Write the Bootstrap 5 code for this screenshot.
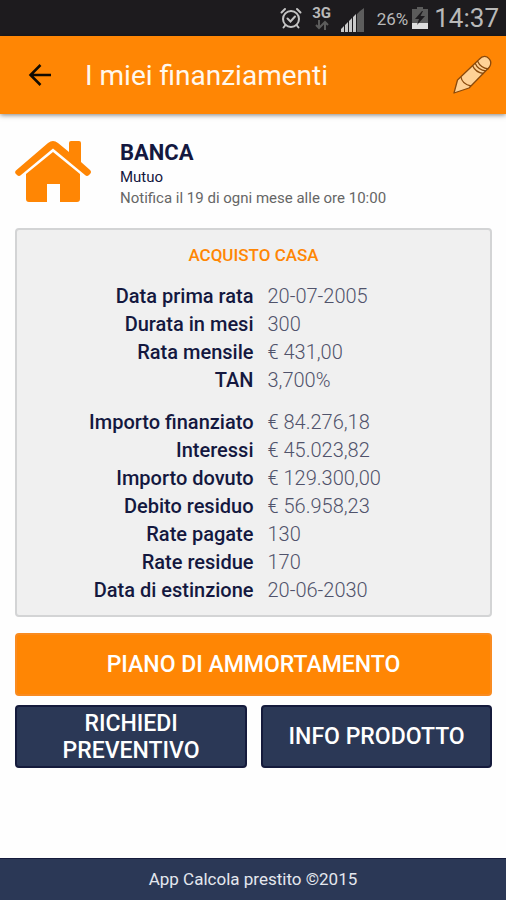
<!DOCTYPE html>
<html lang="it">
<head>
<meta charset="utf-8">
<meta name="viewport" content="width=device-width, initial-scale=1">
<title>I miei finanziamenti</title>
<link rel="stylesheet" href="https://cdn.jsdelivr.net/npm/bootstrap@5.3.0/dist/css/bootstrap.min.css">
<style>
  :root { --brand: #ff8604; --navy: #2b3856; --ink: #14183f; }
  body { font-family: Roboto, "Liberation Sans", sans-serif; color: var(--ink); background: #fefefe; }
  .status-bar { height: 36px; background: #1d1b1e; color: #b9b9b9; padding-right: 7px; line-height: 36px; }
  .status-bar .network { width: 22px; line-height: 14px; font-size: 15px; }
  .status-bar .percent { font-size: 17px; padding-top: 2px; }
  .status-bar .battery { margin: 0 6px 0 4px; }
  .status-bar .clock { font-size: 26px; }
  .app-bar { height: 78px; background: var(--brand); box-shadow: 0 1px 5px rgba(0, 0, 0, .5); padding: 0 14px 0 28px; }
  .app-title { font-size: 28px; line-height: 36px; color: #fff8ee; margin-left: 33px; padding-top: 2px; }
  .page-body { padding: 24px 14px 16px 15px; }
  .loan-icon { width: 76px; height: 64px; margin-top: 2px; }
  .loan-text { margin-left: 29px; }
  .loan-name { font-size: 22px; line-height: 29px; }
  .loan-line { font-size: 15px; line-height: 21px; }
  .loan-note { color: #666; }
  .loan-card { background: #f0f0f0; border: 2px solid #d3d4d5; border-radius: 4px; margin-top: 19px; padding: 12px 0 11px; }
  .loan-card h3 { font-size: 17px; line-height: 26px; color: var(--brand); margin-bottom: 14px; }
  .figures { font-size: 20px; line-height: 28px; table-layout: fixed; }
  .figures tbody + tbody::before { content: ""; display: block; height: 14px; }
  .figures th { padding: 0; text-align: right; font-weight: 500; }
  .figures td { padding: 0 0 0 14px; color: #50536b; font-weight: 300; }
  .action { min-height: 63px; padding: 2px 30px; font-size: 23px; line-height: 27px; font-weight: 500; border-radius: 4px; border-width: 2px; --bs-btn-color: #fff; --bs-btn-hover-color: #fff; --bs-btn-active-color: #fff; }
  .action-main { --bs-btn-bg: var(--brand); --bs-btn-border-color: #f98b20; --bs-btn-hover-bg: #f07c00; --bs-btn-active-bg: #e07400; }
  .action-alt { --bs-btn-bg: var(--navy); --bs-btn-border-color: #151b3c; --bs-btn-hover-bg: #222d47; --bs-btn-active-bg: #1b2439; }
  .actions { gap: 14px; margin-top: 9px; }
  .app-footer { background: var(--navy); border-top: 1px solid #151b3c; color: #e4e7ee; font-size: 17px; line-height: 41px; }
</style>
<script src="https://cdn.jsdelivr.net/npm/bootstrap@5.3.0/dist/js/bootstrap.bundle.min.js" defer></script>
</head>
<body class="d-flex flex-column min-vh-100">
<div class="status-bar d-flex align-items-center justify-content-end">
  <svg class="me-2" width="24" height="24" viewBox="0 0 24 24" fill="none" stroke="#c4c4c4" stroke-width="2" stroke-linecap="round" aria-label="Sveglia"><circle cx="12" cy="13" r="8"/><path d="M2.500 6.500 6 3M21.500 6.500 18 3M6.500 19 4.500 21.500M17.500 19l2 2.500M8.500 12.500l3 3 4.500-5"/></svg>
  <div class="network text-center fw-bold me-1">3G
    <svg class="d-block mx-auto" width="14" height="10" viewBox="0 0 14 10" fill="none" stroke="#5c5c5c" stroke-width="2" aria-hidden="true"><path d="M4 0v8M1 5l3 3 3-3M10 10V2M7 5l3-3 3 3"/></svg>
  </div>
  <svg class="mx-1 mt-1" width="24" height="24" viewBox="0 0 24 24" aria-label="Segnale"><path fill="#cacaca" d="M0 24v-3l3-3v6zM4 24v-7l3-3v10zM8 24V13l3-3v14zM12 24V9l3-3v18z"/><path fill="#5d5d5d" d="M16 24V6l3-3v21zM19 24V3l4-3v24z"/></svg>
  <span class="percent ms-2">26%</span>
  <svg class="battery" width="16" height="22" viewBox="0 0 16 22" aria-label="Batteria"><path fill="#5b5b5b" d="M5 0h6v2h5v14H0V2h5z"/><path fill="#dedede" d="M0 16h16v6H0z"/><path fill="#1d1b1e" d="M10 4 3 12h4l-2 6 8-9H8.500L11 4z"/></svg>
  <span class="clock">14:37</span>
</div>

<header class="app-bar d-flex align-items-center">
  <button type="button" class="btn p-0 border-0 d-flex" aria-label="Indietro">
    <svg width="24" height="24" viewBox="0 0 24 24" fill="none" stroke="#120b02" stroke-width="2.500"><path d="M23 12H3M12.500 2 2.500 12l10 10"/></svg>
  </button>
  <h1 class="app-title fw-normal mb-0">I miei finanziamenti</h1>
  <button type="button" class="btn p-0 border-0 d-flex ms-auto" aria-label="Modifica">
    <svg width="40" height="40" viewBox="0 0 40 40" fill="#ffd296" stroke="#8a4a0c" stroke-width="1.300" stroke-linejoin="round"><path d="M2 38 5.500 25 27 4.500Q31 0 35 2q6 4 2.500 10L17 33z"/><path fill="none" d="M9 22q1 7 10 9M23 8q3 7 11 8M25.500 6q3 7 11 8M20.500 10.500q3 7 11 8"/></svg>
  </button>
</header>

<main class="page-body flex-grow-1">
  <section class="d-flex">
    <svg class="loan-icon flex-shrink-0" viewBox="0 0 76 64" fill="#ff8604" aria-hidden="true"><path d="M11 34 38 12l27 22v25q0 3-3 3H45V44H32v18H14q-3 0-3-3z"/><path d="M1.500 30 33 3q5-4 10 0l11 9V3q0-2 2-2h8q2 0 2 2v19l9 8q2 2 0 4l-1 1q-2 2-4 0L38 8.500 6 35q-2 2-4 0l-1-1q-2-2 .5-4z"/></svg>
    <div class="loan-text">
      <h2 class="loan-name fw-bold mb-0">BANCA</h2>
      <p class="loan-line mb-0">Mutuo</p>
      <p class="loan-line loan-note mb-0">Notifica il 19 di ogni mese alle ore 10:00</p>
    </div>
  </section>

  <section class="loan-card">
    <h3 class="text-center fw-medium">ACQUISTO CASA</h3>
    <table class="figures w-100">
      <tbody>
        <tr><th scope="row">Data prima rata</th><td>20-07-2005</td></tr>
        <tr><th scope="row">Durata in mesi</th><td>300</td></tr>
        <tr><th scope="row">Rata mensile</th><td>€ 431,00</td></tr>
        <tr><th scope="row">TAN</th><td>3,700%</td></tr>
      </tbody>
      <tbody>
        <tr><th scope="row">Importo finanziato</th><td>€ 84.276,18</td></tr>
        <tr><th scope="row">Interessi</th><td>€ 45.023,82</td></tr>
        <tr><th scope="row">Importo dovuto</th><td>€ 129.300,00</td></tr>
        <tr><th scope="row">Debito residuo</th><td>€ 56.958,23</td></tr>
        <tr><th scope="row">Rate pagate</th><td>130</td></tr>
        <tr><th scope="row">Rate residue</th><td>170</td></tr>
        <tr><th scope="row">Data di estinzione</th><td>20-06-2030</td></tr>
      </tbody>
    </table>
  </section>

  <button type="button" class="btn action action-main w-100 mt-3">PIANO DI AMMORTAMENTO</button>
  <div class="actions d-flex">
    <button type="button" class="btn action action-alt w-50">RICHIEDI PREVENTIVO</button>
    <button type="button" class="btn action action-alt w-50 px-2">INFO PRODOTTO</button>
  </div>
</main>

<footer class="app-footer text-center">App Calcola prestito ©2015</footer>
</body>
</html>
